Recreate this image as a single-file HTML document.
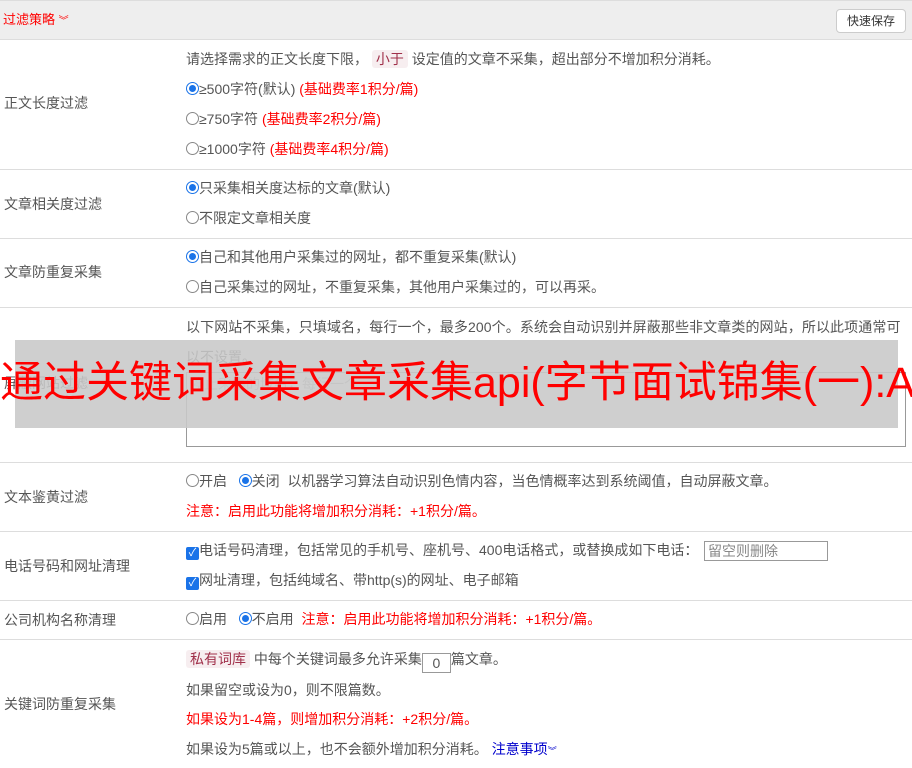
<!DOCTYPE html>
<html><head><meta charset="utf-8"><style>
*{margin:0;padding:0;box-sizing:border-box}
body{width:912px;height:768px;overflow:hidden;background:#fff;font-family:"Liberation Sans","Noto Sans CJK SC",sans-serif;font-size:14px;color:#555;position:relative}
.a{position:absolute;white-space:nowrap;line-height:16px}
.hl{position:absolute;left:0;width:912px;height:1px;background:#ddd}
.r{color:#f00}
.rd{display:inline-block;width:13px;height:13px;border:1px solid #888;border-radius:50%;vertical-align:-1px;position:relative}
.rd.on{border-color:#1a73e8}
.rd.on:after{content:"";position:absolute;left:2px;top:2px;width:7px;height:7px;border-radius:50%;background:#1a73e8}
.cb{display:inline-block;width:13px;height:13px;background:#1a73e8;border-radius:2px;vertical-align:-1px;color:#fff;font-size:11px;line-height:13px;text-align:center}
.tag{background:#f7eef0;color:#a0304a;padding:1px 4px;border-radius:3px}
</style></head><body>
<div style="position:absolute;left:0;top:0;width:912px;height:39px;background:#eee;border-top:1px solid #ddd"></div>
<div class="a r" style="left:3px;top:12px;font-size:13px">过滤策略 <span style="font-size:10px">︾</span></div>
<div style="position:absolute;left:836px;top:9px;width:70px;height:24px;background:#fff;border:1px solid #ccc;border-radius:4px;font-size:12px;line-height:22px;text-align:center;color:#333">快速保存</div>
<div class="hl" style="top:39px"></div>
<div class="hl" style="top:169px"></div>
<div class="hl" style="top:238px"></div>
<div class="hl" style="top:307px"></div>
<div class="hl" style="top:462px"></div>
<div class="hl" style="top:531px"></div>
<div class="hl" style="top:600px"></div>
<div class="hl" style="top:639px"></div>

<div class="a" style="left:4px;top:95px">正文长度过滤</div>
<div class="a" style="left:186px;top:51px">请选择需求的正文长度下限， <span class="tag">小于</span> 设定值的文章不采集，超出部分不增加积分消耗。</div>
<div class="a" style="left:186px;top:81px"><span class="rd on"></span>≥500字符(默认) <span class="r">(基础费率1积分/篇)</span></div>
<div class="a" style="left:186px;top:111px"><span class="rd"></span>≥750字符 <span class="r">(基础费率2积分/篇)</span></div>
<div class="a" style="left:186px;top:141px"><span class="rd"></span>≥1000字符 <span class="r">(基础费率4积分/篇)</span></div>

<div class="a" style="left:4px;top:196px">文章相关度过滤</div>
<div class="a" style="left:186px;top:180px"><span class="rd on"></span>只采集相关度达标的文章(默认)</div>
<div class="a" style="left:186px;top:210px"><span class="rd"></span>不限定文章相关度</div>

<div class="a" style="left:4px;top:264px">文章防重复采集</div>
<div class="a" style="left:186px;top:249px"><span class="rd on"></span>自己和其他用户采集过的网址，都不重复采集(默认)</div>
<div class="a" style="left:186px;top:279px"><span class="rd"></span>自己采集过的网址，不重复采集，其他用户采集过的，可以再采。</div>

<div class="a" style="left:186px;top:319px;font-size:14px;letter-spacing:0.1px">以下网站不采集，只填域名，每行一个，最多200个。系统会自动识别并屏蔽那些非文章类的网站，所以此项通常可</div>
<div class="a" style="left:186px;top:349px">以不设置。</div>
<div style="position:absolute;left:186px;top:372px;width:720px;height:75px;border:1px solid #999"></div>
<div class="a" style="left:190px;top:376px;color:#aaa">停止采集的域名，每行一个</div>
<div class="a" style="left:4px;top:375px">屏蔽网站过滤</div>

<div class="a" style="left:4px;top:489px">文本鉴黄过滤</div>
<div class="a" style="left:186px;top:473px"><span class="rd"></span>开启 &nbsp; <span class="rd on"></span>关闭 &nbsp;以机器学习算法自动识别色情内容，当色情概率达到系统阈值，自动屏蔽文章。</div>
<div class="a r" style="left:186px;top:503px">注意：启用此功能将增加积分消耗：+1积分/篇。</div>

<div class="a" style="left:4px;top:558px">电话号码和网址清理</div>
<div class="a" style="left:186px;top:542px"><span class="cb">✓</span>电话号码清理，包括常见的手机号、座机号、400电话格式，或替换成如下电话：</div>
<div style="position:absolute;left:704px;top:541px;width:124px;height:20px;border:1px solid #999;padding-left:3px;line-height:18px;color:#888">留空则删除</div>
<div class="a" style="left:186px;top:572px"><span class="cb">✓</span>网址清理，包括纯域名、带http(s)的网址、电子邮箱</div>

<div class="a" style="left:4px;top:612px">公司机构名称清理</div>
<div class="a" style="left:186px;top:611px"><span class="rd"></span>启用 &nbsp; <span class="rd on"></span>不启用 &nbsp;<span class="r">注意：启用此功能将增加积分消耗：+1积分/篇。</span></div>

<div class="a" style="left:4px;top:696px">关键词防重复采集</div>
<div class="a" style="left:186px;top:651px"><span class="tag">私有词库</span> 中每个关键词最多允许采集<span style="display:inline-block;width:29px;height:20px;border:1px solid #999;text-align:center;line-height:18px;vertical-align:-4px">0</span>篇文章。</div>
<div class="a" style="left:186px;top:682px">如果留空或设为0，则不限篇数。</div>
<div class="a r" style="left:186px;top:711px">如果设为1-4篇，则增加积分消耗：+2积分/篇。</div>
<div class="a" style="left:186px;top:741px">如果设为5篇或以上，也不会额外增加积分消耗。 <span style="color:#00c">注意事项<span style="font-size:9px">︾</span></span></div>

<div style="position:absolute;left:15px;top:340px;width:883px;height:88px;background:rgba(200,200,200,0.88)"></div>
<div class="a" style="left:0;top:358px;font-size:43px;line-height:50px;color:#f00">通过关键词采集文章采集api(字节面试锦集(一):A</div>
</body></html>
